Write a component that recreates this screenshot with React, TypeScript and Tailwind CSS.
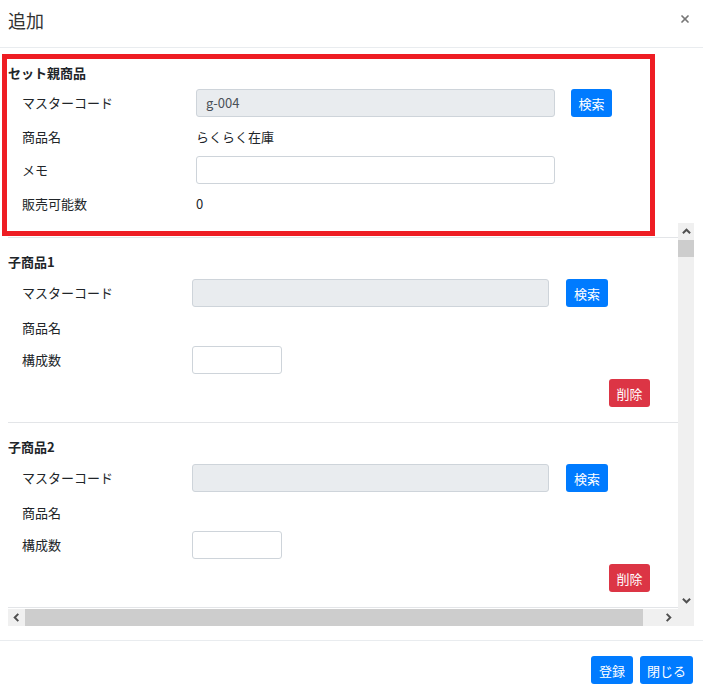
import { X } from 'lucide-react';

const jp = "font-['Noto_Sans_CJK_JP','Noto_Sans',sans-serif]";

function Chevron({ dir }: { dir: 'up' | 'down' | 'left' | 'right' }) {
  const rot = { up: 0, right: 90, down: 180, left: 270 }[dir];
  return (
    <svg width="9" height="9" viewBox="0 0 10 10" style={{ transform: `rotate(${rot}deg)` }}>
      <path d="M1 7 L5 3 L9 7" fill="none" stroke="#505050" strokeWidth="2.2" />
    </svg>
  );
}

function BlueButton({ label, className = '' }: { label: string; className?: string }) {
  return (
    <button className={`h-[28px] bg-[#007bff] text-white text-[13px] leading-none rounded-[3px] ${className}`}>
      {label}
    </button>
  );
}

function ChildItem({ index }: { index: number }) {
  return (
    <div className="border-b border-[#e3e5e8] pb-[15px]">
      <div className="mt-[14px] h-[20px] leading-[20px] text-[13px] font-bold text-[#212529]">子商品{index}</div>
      <div className="pl-[14px]">
        <div className="mt-[7px] flex items-center h-[28px]">
          <span className="w-[170px] text-[13px]">マスターコード</span>
          <div className="w-[357px] h-[28px] bg-[#e9ecef] border border-[#ced4da] rounded-[3px]" />
          <BlueButton label="検索" className="ml-[17px] w-[42px]" />
        </div>
        <div className="mt-[7px] flex items-center h-[28px]">
          <span className="w-[170px] text-[13px]">商品名</span>
        </div>
        <div className="mt-[4px] flex items-center h-[28px]">
          <span className="w-[170px] text-[13px]">構成数</span>
          <div className="w-[90px] h-[28px] bg-white border border-[#ced4da] rounded-[3px]" />
        </div>
        <div className="mt-[5px] flex justify-end pr-[28px]">
          <button className="h-[28px] w-[41px] bg-[#dc3545] text-white text-[13px] leading-none rounded-[3px]">削除</button>
        </div>
      </div>
    </div>
  );
}

export default function App() {
  return (
    <div className={`w-[703px] h-[693px] bg-white text-[#212529] overflow-hidden ${jp}`}>
      {/* header */}
      <div className="h-[48px] border-b border-[#e9ecef] flex items-start justify-between">
        <h5 className="pl-[8px] pt-[6px] text-[18px] leading-[28px] text-[#333]">追加</h5>
        <button className="mt-[13px] mr-[12px] text-[#777]">
          <X className="w-[12px] h-[12px]" strokeWidth={3.5} />
        </button>
      </div>

      <div className="relative">
        {/* parent product */}
        <div className="h-[175px]">
          <div className="pl-[8px] pt-[15px] h-[35px] leading-[20px] text-[13px] font-bold">セット親商品</div>
          <div className="pl-[22px]">
            <div className="mt-[6px] flex items-center h-[28px]">
              <span className="w-[174px] text-[13px]">マスターコード</span>
              <div className="w-[359px] h-[28px] bg-[#e9ecef] border border-[#ced4da] rounded-[3px] flex items-center pl-[9px] text-[13px] text-[#495057]">
                g-004
              </div>
              <BlueButton label="検索" className="ml-[16px] w-[41px]" />
            </div>
            <div className="mt-[6px] flex items-center h-[28px]">
              <span className="w-[174px] text-[13px]">商品名</span>
              <span className="text-[13px]">らくらく在庫</span>
            </div>
            <div className="mt-[5px] flex items-center h-[28px]">
              <span className="w-[174px] text-[13px]">メモ</span>
              <div className="w-[359px] h-[28px] bg-white border border-[#ced4da] rounded-[3px]" />
            </div>
            <div className="mt-[6px] flex items-center h-[28px]">
              <span className="w-[174px] text-[13px]">販売可能数</span>
              <span className="text-[13px]">0</span>
            </div>
          </div>
        </div>

        {/* child products, scrolling */}
        <div className="flex pl-[8px] h-[403px]">
          <div className="w-[670px] flex flex-col">
            <div className="h-[386px] overflow-hidden pt-[14px]">
              <div className="border-t border-[#e3e5e8]" />
              <ChildItem index={1} />
              <ChildItem index={2} />
            </div>
            <div className="h-[17px] flex bg-[#f0f0f0]">
              <div className="w-[17px] flex items-center justify-center"><Chevron dir="left" /></div>
              <div className="w-[618px] bg-[#cdcdcd]" />
              <div className="flex-1 flex items-center justify-end pr-[5px]"><Chevron dir="right" /></div>
            </div>
          </div>
          <div className="w-[16px] flex flex-col bg-[#f0f0f0]">
            <div className="h-[17px] flex items-center justify-center"><Chevron dir="up" /></div>
            <div className="h-[17px] bg-[#cdcdcd]" />
            <div className="flex-1" />
            <div className="h-[17px] flex items-center justify-center"><Chevron dir="down" /></div>
            <div className="h-[17px]" />
          </div>
        </div>

        {/* highlight frame */}
        <div className="absolute left-[2px] top-[6px] w-[653px] h-[182px] border-[5px] border-[#ee1d23] pointer-events-none" />
      </div>

      {/* footer */}
      <div className="mt-[14px] border-t border-[#e9ecef] pt-[15px] flex justify-end gap-[7px] pr-[10px]">
        <BlueButton label="登録" className="w-[42px]" />
        <BlueButton label="閉じる" className="w-[53px]" />
      </div>
    </div>
  );
}
